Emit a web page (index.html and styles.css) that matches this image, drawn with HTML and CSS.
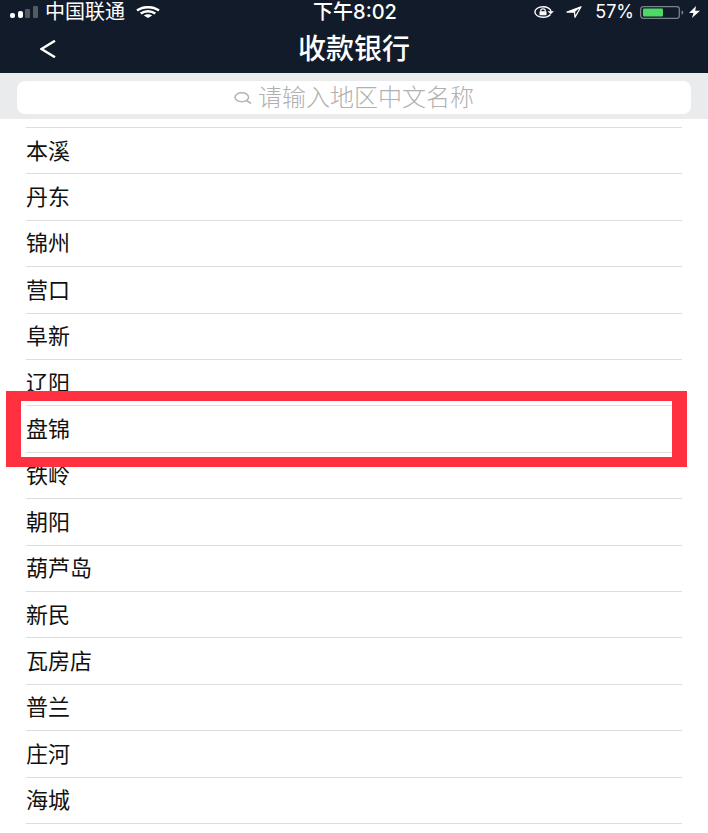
FILE: index.html
```html
<!DOCTYPE html>
<html lang="zh-CN">
<head>
<meta charset="utf-8">
<meta name="viewport" content="width=device-width, initial-scale=1">
<title>收款银行</title>
<link rel="stylesheet" href="styles.css">
</head>
<body>
<header class="header">
  <div class="status">
    <div class="status-left">
      <svg class="signal" width="28" height="12" viewBox="0 0 28 12" aria-hidden="true">
        <rect x="0" y="7" width="5" height="5" rx="2" fill="#fff"/>
        <rect x="8" y="5" width="5" height="7" rx="2" fill="#fff"/>
        <rect x="15" y="3" width="5" height="9" rx="1" fill="#535a66"/>
        <rect x="23" y="0" width="5" height="12" rx="1" fill="#535a66"/>
      </svg>
      <span>中国联通</span>
      <svg class="wifi" width="24" height="12" viewBox="0 0 24 12" aria-hidden="true">
        <g fill="none" stroke="#fff" stroke-width="2.500">
          <path d="M1 4.600C7 .1 17 .1 23 4.600"/>
          <path d="M4.700 7.600c4.200-3.100 10.400-3.100 14.600 0"/>
        </g>
        <path d="M7.800 9.600c2.400-1.800 6-1.800 8.400 0L12 12z" fill="#fff"/>
      </svg>
    </div>
    <time class="time">下午8:02</time>
    <div class="status-right">
      <svg width="20" height="12" viewBox="0 0 20 12" aria-hidden="true">
        <path d="M16.500 8.500C15 10.300 12.200 11.300 9 11.300c-4.500 0-8.100-2.400-8.100-5.300S4.500.7 9 .7c4.300 0 7.700 2.100 8.100 4.800" fill="none" stroke="#fff" stroke-width="1.400"/>
        <path d="M13.500 5.300H20l-3.300 3z" fill="#fff"/>
        <rect x="5.500" y="5.200" width="7" height="4" rx=".5" fill="#fff"/>
        <path d="M6.800 5.500V4.300c0-2 4.400-2 4.400 0v1.200" fill="none" stroke="#fff" stroke-width="1.200"/>
      </svg>
      <svg class="locate" width="16" height="12" viewBox="0 0 16 12" aria-hidden="true">
        <path d="M1 6 15 .8 9 11.200 8.500 6z" fill="none" stroke="#fff" stroke-width="1.300" stroke-linejoin="round"/>
        <path d="M1 6 15 .8 8.500 6.300z" fill="#fff"/>
      </svg>
      <span class="percent">57%</span>
      <svg class="battery" width="44" height="13" viewBox="0 0 44 13" aria-hidden="true">
        <rect x=".7" y=".7" width="38.600" height="11.600" rx="2.500" fill="none" stroke="#7b818b" stroke-width="1.300"/>
        <rect x="3" y="2.500" width="20" height="8" rx="1" fill="#4cd964"/>
        <path d="M41.500 4.500c2.400.5 2.400 3.500 0 4z" fill="#7b818b"/>
      </svg>
      <svg class="bolt" width="11" height="12" viewBox="0 0 11 12" aria-hidden="true">
        <path d="M7 0 0 7h4.500L3 12l8-7.200H6.200z" fill="#fff"/>
      </svg>
    </div>
  </div>
  <div class="nav">
    <button class="back" type="button" aria-label="返回">
      <svg width="16" height="18" viewBox="0 0 16 18" aria-hidden="true">
        <path d="M15 .8 1.500 9 15 17.200" fill="none" stroke="#fff" stroke-width="2.500"/>
      </svg>
    </button>
    <h1 class="title">收款银行</h1>
  </div>
</header>
<div class="search">
  <label class="search-box">
    <svg width="18" height="12" viewBox="0 0 18 12" aria-hidden="true">
      <ellipse cx="7.800" cy="5.300" rx="6.800" ry="4.500" fill="none" stroke="#b4b4b4" stroke-width="1.500"/>
      <path d="m12.500 8.500 4.500 3" fill="none" stroke="#b4b4b4" stroke-width="1.600"/>
    </svg>
    <input class="search-input" type="text" placeholder="请输入地区中文名称" aria-label="请输入地区中文名称">
  </label>
</div>
<main class="main">
  <ul class="list">
    <li class="row">本溪</li>
    <li class="row">丹东</li>
    <li class="row">锦州</li>
    <li class="row">营口</li>
    <li class="row">阜新</li>
    <li class="row">辽阳</li>
    <li class="row marked">盘锦</li>
    <li class="row">铁岭</li>
    <li class="row">朝阳</li>
    <li class="row">葫芦岛</li>
    <li class="row">新民</li>
    <li class="row">瓦房店</li>
    <li class="row">普兰</li>
    <li class="row">庄河</li>
    <li class="row">海城</li>
  </ul>
</main>
</body>
</html>
```
FILE: styles.css
```css
* {
  box-sizing: border-box;
}

body {
  margin: 0;
  min-height: 100vh;
  display: flex;
  flex-direction: column;
  background: #fff;
  color: #111;
  font-family: Inter, "Noto Sans CJK SC", sans-serif;
  font-size: 22px;
}

svg {
  display: block;
  flex: none;
}

.header {
  background: #121b29;
  color: #fff;
}

.status {
  display: grid;
  grid-template-columns: 1fr auto 1fr;
  align-items: center;
  height: 24px;
  padding: 0 8px 0 10px;
  font-size: 20px;
  line-height: 24px;
}

.status-left,
.status-right {
  display: flex;
  align-items: center;
}

.status-left {
  gap: 7px;
}

.wifi {
  margin-left: 4px;
}

.status-right {
  justify-content: flex-end;
  font-size: 18px;
}

.locate {
  margin: 0 13px 0 12px;
}

.battery {
  margin: 0 5px 0 6px;
}

.time {
  font-weight: 500;
}

.nav {
  display: grid;
  grid-template-columns: 1fr auto 1fr;
  align-items: center;
  height: 49px;
}

.back {
  justify-self: start;
  margin-left: 32px;
  padding: 8px;
  border: 0;
  background: none;
}

.title {
  margin: 0;
  font-size: 28px;
  line-height: 32px;
  font-weight: 500;
}

.search {
  padding: 8px 17px 5px;
  background: #e9ebed;
}

.search-box {
  display: flex;
  align-items: center;
  justify-content: center;
  gap: 6px;
  height: 33px;
  border-radius: 8px;
  background: #fff;
}

.search-input {
  width: 9em;
  padding: 0;
  border: 0;
  outline: 0;
  background: none;
  color: #111;
  font: inherit;
  font-size: 24px;
  line-height: 32px;
}

.search-input::placeholder {
  color: #b0b0b0;
  font-weight: 300;
  opacity: 1;
}

.main {
  flex: 1;
  display: flex;
  padding: 8px 26px 9px;
}

.list {
  flex: 1;
  display: grid;
  grid-auto-rows: 1fr;
  margin: 0;
  padding: 0;
  border-top: 1px solid #dedede;
  list-style: none;
}

.row {
  display: flex;
  align-items: center;
  border-bottom: 1px solid #dedede;
  line-height: 32px;
}

.marked {
  position: relative;
}

.marked::after {
  content: "";
  position: absolute;
  inset: -15px -5px -15px -20px;
  border: solid #ff3040;
  border-width: 10px 15px;
  pointer-events: none;
}
```
